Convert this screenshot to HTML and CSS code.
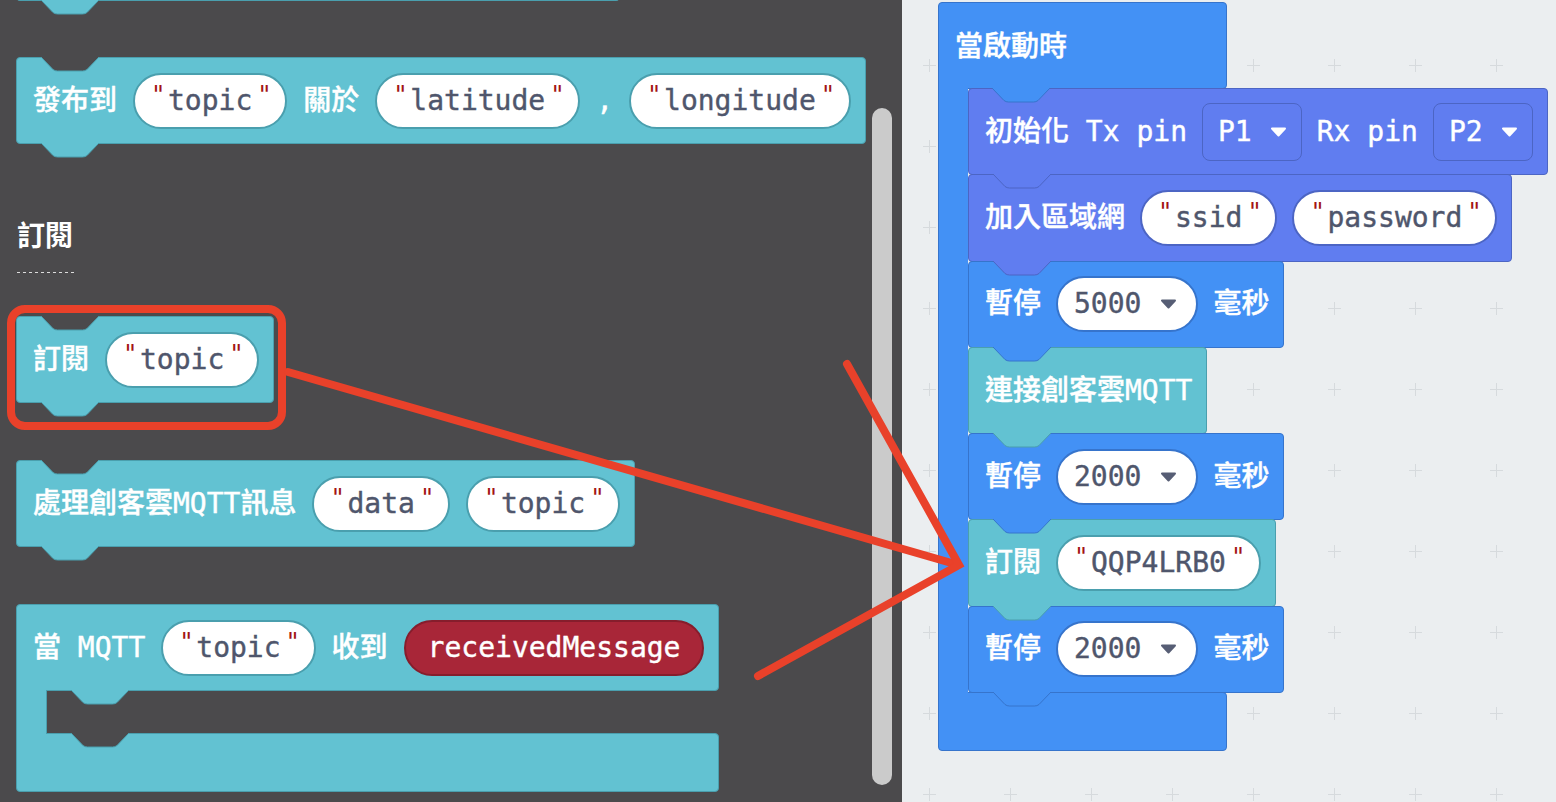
FILE: index.html
```html
<!DOCTYPE html>
<html lang="zh-Hant">
<head>
<meta charset="utf-8">
<title>MakeCode MQTT</title>
<link rel="stylesheet" href="styles.css">
</head>
<body>
<div class="app">
  <div class="flyout">
    <div class="flyout-list">
      <div class="block teal partial">
        <svg class="tab" width="58" height="16" viewBox="0 0 58 16"><path d="M0,0 L12,12.5 Q14,14 16.5,14 L41.5,14 Q44,14 46,12.5 L58,0"/></svg>
      </div>

      <div class="block teal publish">
        <svg class="notch" width="58" height="16" viewBox="0 0 58 16"><path d="M0,0 L12,12.5 Q14,14 16.5,14 L41.5,14 Q44,14 46,12.5 L58,0"/></svg>
        <span class="lbl">發布到</span>
        <span class="pill"><span class="q">"</span><span class="v">topic</span><span class="q">"</span></span>
        <span class="lbl">關於</span>
        <span class="pill"><span class="q">"</span><span class="v">latitude</span><span class="q">"</span></span>
        <span class="lbl">,</span>
        <span class="pill"><span class="q">"</span><span class="v">longitude</span><span class="q">"</span></span>
        <svg class="tab" width="58" height="16" viewBox="0 0 58 16"><path d="M0,0 L12,12.5 Q14,14 16.5,14 L41.5,14 Q44,14 46,12.5 L58,0"/></svg>
      </div>

      <div class="heading">訂閱</div>
      <div class="dots"></div>

      <div class="block teal sub">
        <svg class="notch" width="58" height="16" viewBox="0 0 58 16"><path d="M0,0 L12,12.5 Q14,14 16.5,14 L41.5,14 Q44,14 46,12.5 L58,0"/></svg>
        <span class="lbl">訂閱</span>
        <span class="pill"><span class="q">"</span><span class="v">topic</span><span class="q">"</span></span>
        <svg class="tab" width="58" height="16" viewBox="0 0 58 16"><path d="M0,0 L12,12.5 Q14,14 16.5,14 L41.5,14 Q44,14 46,12.5 L58,0"/></svg>
      </div>

      <div class="block teal handle">
        <svg class="notch" width="58" height="16" viewBox="0 0 58 16"><path d="M0,0 L12,12.5 Q14,14 16.5,14 L41.5,14 Q44,14 46,12.5 L58,0"/></svg>
        <span class="lbl">處理創客雲MQTT訊息</span>
        <span class="pill"><span class="q">"</span><span class="v">data</span><span class="q">"</span></span>
        <span class="pill"><span class="q">"</span><span class="v">topic</span><span class="q">"</span></span>
        <svg class="tab" width="58" height="16" viewBox="0 0 58 16"><path d="M0,0 L12,12.5 Q14,14 16.5,14 L41.5,14 Q44,14 46,12.5 L58,0"/></svg>
      </div>

      <div class="cblock teal">
        <div class="block c-top">
          <span class="lbl">當 MQTT</span>
          <span class="pill"><span class="q">"</span><span class="v">topic</span><span class="q">"</span></span>
          <span class="lbl">收到</span>
          <span class="pill var">receivedMessage</span>
          <svg class="tab" width="58" height="16" viewBox="0 0 58 16"><path d="M0,0 L12,12.5 Q14,14 16.5,14 L41.5,14 Q44,14 46,12.5 L58,0"/></svg>
        </div>
        <div class="c-mid">
          <div class="c-arm"></div>
          <div class="c-slot"></div>
        </div>
        <div class="c-bottom">
          <svg class="notch" width="58" height="16" viewBox="0 0 58 16"><path d="M0,0 L12,12.5 Q14,14 16.5,14 L41.5,14 Q44,14 46,12.5 L58,0"/></svg>
        </div>
      </div>
    </div>
    <div class="scrollbar"></div>
  </div>

  <div class="workspace">
    <svg class="grid" width="654" height="802">
      <defs>
        <pattern id="plus" x="21" y="59" width="81" height="81" patternUnits="userSpaceOnUse">
          <path d="M0,6.5 H13 M6.5,0 V13"/>
        </pattern>
      </defs>
      <rect width="654" height="802" fill="url(#plus)"/>
    </svg>

    <div class="hat blue">
      <div class="hat-top">
        <span class="lbl">當啟動時</span>
        <svg class="tab" width="58" height="16" viewBox="0 0 58 16"><path d="M0,0 L12,12.5 Q14,14 16.5,14 L41.5,14 Q44,14 46,12.5 L58,0"/></svg>
      </div>
      <div class="hat-mid">
        <div class="hat-arm"></div>
        <div class="stack">
          <div class="block indigo">
            <span class="lbl">初始化 Tx pin</span>
            <span class="dd"><span class="v">P1</span><svg class="caret" width="17" height="10" viewBox="0 0 17 10"><path d="M2,1.5 H15 L8.5,8.5 Z"/></svg></span>
            <span class="lbl">Rx pin</span>
            <span class="dd"><span class="v">P2</span><svg class="caret" width="17" height="10" viewBox="0 0 17 10"><path d="M2,1.5 H15 L8.5,8.5 Z"/></svg></span>
            <svg class="tab" width="58" height="16" viewBox="0 0 58 16"><path d="M0,0 L12,12.5 Q14,14 16.5,14 L41.5,14 Q44,14 46,12.5 L58,0"/></svg>
          </div>
          <div class="block indigo">
            <span class="lbl">加入區域網</span>
            <span class="pill"><span class="q">"</span><span class="v">ssid</span><span class="q">"</span></span>
            <span class="pill"><span class="q">"</span><span class="v">password</span><span class="q">"</span></span>
            <svg class="tab" width="58" height="16" viewBox="0 0 58 16"><path d="M0,0 L12,12.5 Q14,14 16.5,14 L41.5,14 Q44,14 46,12.5 L58,0"/></svg>
          </div>
          <div class="block blue">
            <span class="lbl">暫停</span>
            <span class="pill num"><span class="v">5000</span><svg class="caret" width="17" height="10" viewBox="0 0 17 10"><path d="M2,1.5 H15 L8.5,8.5 Z"/></svg></span>
            <span class="lbl">毫秒</span>
            <svg class="tab" width="58" height="16" viewBox="0 0 58 16"><path d="M0,0 L12,12.5 Q14,14 16.5,14 L41.5,14 Q44,14 46,12.5 L58,0"/></svg>
          </div>
          <div class="block teal">
            <span class="lbl">連接創客雲MQTT</span>
            <svg class="tab" width="58" height="16" viewBox="0 0 58 16"><path d="M0,0 L12,12.5 Q14,14 16.5,14 L41.5,14 Q44,14 46,12.5 L58,0"/></svg>
          </div>
          <div class="block blue">
            <span class="lbl">暫停</span>
            <span class="pill num"><span class="v">2000</span><svg class="caret" width="17" height="10" viewBox="0 0 17 10"><path d="M2,1.5 H15 L8.5,8.5 Z"/></svg></span>
            <span class="lbl">毫秒</span>
            <svg class="tab" width="58" height="16" viewBox="0 0 58 16"><path d="M0,0 L12,12.5 Q14,14 16.5,14 L41.5,14 Q44,14 46,12.5 L58,0"/></svg>
          </div>
          <div class="block teal">
            <span class="lbl">訂閱</span>
            <span class="pill"><span class="q">"</span><span class="v">QQP4LRB0</span><span class="q">"</span></span>
            <svg class="tab" width="58" height="16" viewBox="0 0 58 16"><path d="M0,0 L12,12.5 Q14,14 16.5,14 L41.5,14 Q44,14 46,12.5 L58,0"/></svg>
          </div>
          <div class="block blue">
            <span class="lbl">暫停</span>
            <span class="pill num"><span class="v">2000</span><svg class="caret" width="17" height="10" viewBox="0 0 17 10"><path d="M2,1.5 H15 L8.5,8.5 Z"/></svg></span>
            <span class="lbl">毫秒</span>
            <svg class="tab" width="58" height="16" viewBox="0 0 58 16"><path d="M0,0 L12,12.5 Q14,14 16.5,14 L41.5,14 Q44,14 46,12.5 L58,0"/></svg>
          </div>
        </div>
      </div>
      <div class="hat-bottom"></div>
    </div>
  </div>

  <svg class="annot" width="1556" height="802" viewBox="0 0 1556 802">
    <rect x="11" y="309" width="271" height="117" rx="14"/>
    <line x1="288" y1="372" x2="955" y2="564"/>
    <polyline points="847,364 959,565 758,676"/>
  </svg>
</div>
</body>
</html>
```

FILE: styles.css
```css
* { box-sizing: border-box; }

html, body {
  margin: 0;
  padding: 0;
}

body {
  width: 1556px;
  height: 802px;
  overflow: hidden;
  font-family: "DejaVu Sans Mono", "Noto Sans CJK TC", monospace;
}

.app {
  position: relative;
  display: flex;
  width: 1556px;
  height: 802px;
  overflow: hidden;
}

/* colour themes */
.teal { --bg: #62c2d2; --bd: #4a9fae; }
.blue { --bg: #4391f5; --bd: #3674cc; }
.indigo { --bg: #607df0; --bd: #4c65c4; }

/* ---------- flyout (left) ---------- */
.flyout {
  flex: none;
  width: 902px;
  height: 802px;
  background: #4b4a4c;
  display: flex;
  overflow: hidden;
}

.flyout-list {
  flex: 1;
  display: flex;
  flex-direction: column;
  align-items: flex-start;
  padding-left: 16px;
}

.scrollbar {
  flex: none;
  width: 20px;
  height: 677px;
  margin: 108px 10px 0 0;
  background: #cbcbcb;
  border-radius: 10px;
}

.heading {
  margin-top: 76px;
  margin-left: 1px;
  font-family: "Noto Sans CJK TC", sans-serif;
  font-weight: 700;
  font-size: 28px;
  line-height: 28px;
  color: #ffffff;
}

.dots {
  margin-top: 24px;
  margin-left: 1px;
  width: 57px;
  height: 1px;
  background: repeating-linear-gradient(to right, #dcdcdc 0 3px, transparent 3px 6px);
}

/* ---------- blocks ---------- */
.block {
  position: relative;
  flex: none;
  display: flex;
  align-items: center;
  gap: 16px;
  height: 87px;
  padding: 0 14px 0 16px;
  border: 1px solid var(--bd);
  border-radius: 4px;
  background: var(--bg);
  color: #ffffff;
  font-size: 28px;
  line-height: 1;
  white-space: pre;
  -webkit-text-stroke: 0.4px currentColor;
}

.partial { width: 604px; margin-top: -86px; }
.publish { margin-top: 56px; }
.sub { margin-top: 43px; }
.handle { margin-top: 57px; }

.lbl { display: block; font-weight: 500; }

.tab {
  position: absolute;
  left: 24px;
  top: 100%;
  z-index: 2;
  overflow: visible;
}
.tab path { fill: var(--bg); stroke: var(--bd); stroke-width: 1; }

.notch {
  position: absolute;
  left: 24px;
  top: -1px;
  overflow: visible;
}
.notch path { fill: #4b4a4c; stroke: var(--bd); stroke-width: 1; }

/* pills */
.pill {
  display: inline-flex;
  align-items: center;
  height: 56px;
  padding: 0 16px;
  border: 2px solid var(--bd);
  border-radius: 28px;
  background: #ffffff;
  color: #4f566c;
}

.q {
  align-self: flex-start;
  width: 12px;
  margin-top: 8px;
  font-size: 24px;
  line-height: 1;
  text-align: center;
  color: #a31515;
  -webkit-text-stroke: 0;
}

.pill .v { margin: 0 5px; }

.pill.num { padding: 0 19px 0 16px; gap: 19px; }
.pill.num .v { margin: 0; }
.pill.num .caret path { fill: #575e75; stroke: #575e75; }

.pill.var {
  padding: 0 22px;
  background: #a82638;
  border-color: #861d2c;
  color: #ffffff;
}

/* dropdown on coloured block */
.dd {
  display: inline-flex;
  align-items: center;
  gap: 18px;
  height: 58px;
  padding: 0 14px 0 15px;
  border: 1px solid var(--bd);
  border-radius: 8px;
  background: var(--bg);
  color: #ffffff;
}

.caret { display: block; flex: none; }
.caret path {
  fill: #ffffff;
  stroke: #ffffff;
  stroke-width: 2;
  stroke-linejoin: round;
}

/* C-shaped event block */
.cblock {
  margin-top: 57px;
  width: 703px;
  display: flex;
  flex-direction: column;
}

.c-top {
  width: 100%;
  border-radius: 4px 4px 4px 0;
}
.c-top .tab { left: 54px; }

.c-mid {
  display: flex;
  height: 44px;
  margin: -1px 0;
}

.c-arm {
  position: relative;
  z-index: 1;
  width: 31px;
  background: var(--bg);
  border-left: 1px solid var(--bd);
  border-right: 1px solid var(--bd);
}

.c-slot { flex: 1; }

.c-bottom {
  position: relative;
  height: 59px;
  border: 1px solid var(--bd);
  border-radius: 0 4px 4px 4px;
  background: var(--bg);
}
.c-bottom .notch { left: 54px; }

/* ---------- workspace (right) ---------- */
.workspace {
  position: relative;
  flex: 1;
  background: #ebeef0;
}

.grid {
  position: absolute;
  left: 0;
  top: 0;
}
.grid path { stroke: #d6dadd; stroke-width: 1; fill: none; }

.hat {
  position: relative;
  z-index: 1;
  width: max-content;
  margin: 2px 0 0 36px;
  display: flex;
  flex-direction: column;
}

.hat-top {
  position: relative;
  width: 289px;
  height: 87px;
  padding: 2px 0 0 16px;
  display: flex;
  align-items: center;
  border: 1px solid var(--bd);
  border-radius: 4px 4px 4px 0;
  background: var(--bg);
  color: #ffffff;
  font-size: 28px;
  line-height: 1;
  -webkit-text-stroke: 0.4px currentColor;
}
.hat-top .tab { left: 53px; }

.hat-mid {
  display: flex;
  margin: -1px 0;
}

.hat-arm {
  position: relative;
  z-index: 1;
  flex: none;
  width: 30px;
  background: var(--bg);
  border-left: 1px solid var(--bd);
}

.stack {
  display: flex;
  flex-direction: column;
  align-items: flex-start;
}

.stack .block {
  height: 87.3px;
  margin-top: -1px;
  padding-right: 14px;
  gap: 15px;
}
.stack .block:first-child { margin-top: 0; }

.hat-bottom {
  width: 289px;
  height: 59px;
  border: 1px solid var(--bd);
  border-radius: 0 4px 4px 4px;
  background: var(--bg);
}

/* ---------- annotation overlay ---------- */
.annot {
  position: absolute;
  left: 0;
  top: 0;
  z-index: 10;
  pointer-events: none;
}
.annot rect,
.annot line,
.annot polyline {
  fill: none;
  stroke: #e9412a;
  stroke-width: 8;
  stroke-linecap: round;
  stroke-linejoin: miter;
}
```
